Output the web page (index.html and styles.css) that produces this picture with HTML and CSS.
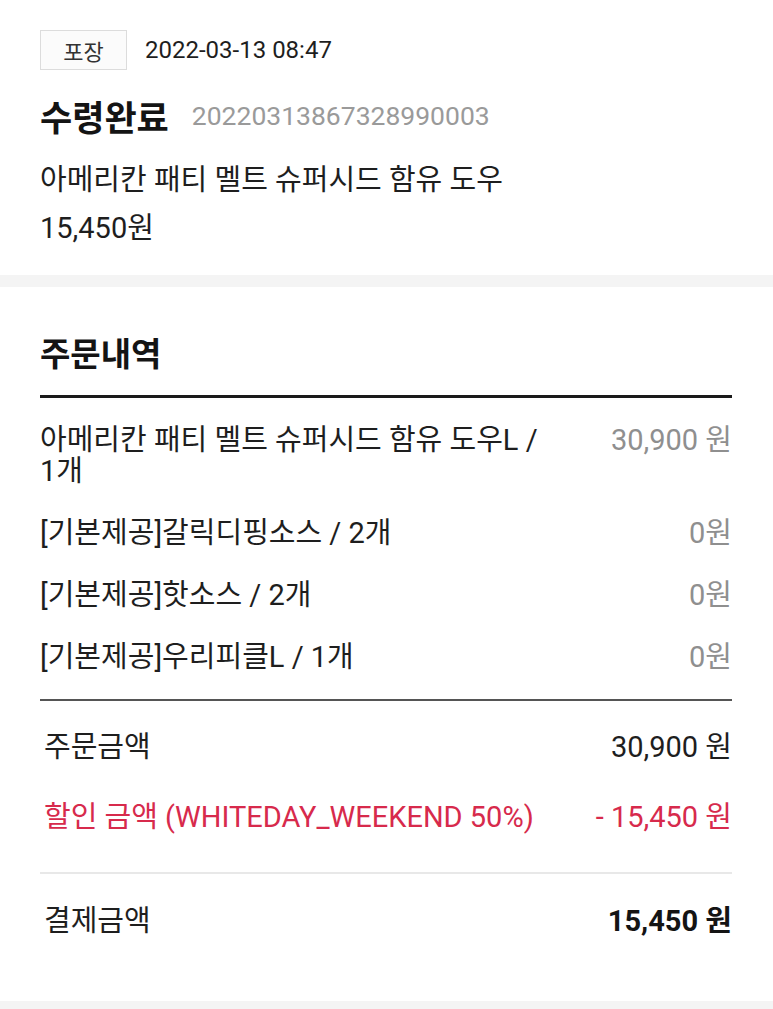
FILE: index.html
```html
<!DOCTYPE html>
<html lang="ko">
<head>
<meta charset="utf-8">
<title>주문 상세</title>
<link rel="stylesheet" href="styles.css">
</head>
<body>
<section class="summary-card">
  <div class="meta">
    <span class="tag">포장</span>
    <span class="date">2022-03-13 08:47</span>
  </div>
  <div class="status-row">
    <span class="status">수령완료</span>
    <span class="order-no">20220313867328990003</span>
  </div>
  <p class="product">아메리칸 패티 멜트 슈퍼시드 함유 도우</p>
  <p class="product">15,450원</p>
</section>

<div class="band"></div>

<section class="orders">
  <h2 class="orders-title">주문내역</h2>
  <ul class="items">
    <li class="item"><span class="item-name">아메리칸 패티 멜트 슈퍼시드 함유 도우L / 1개</span><span class="item-price">30,900 원</span></li>
    <li class="item"><span class="item-name">[기본제공]갈릭디핑소스 / 2개</span><span class="item-price">0원</span></li>
    <li class="item"><span class="item-name">[기본제공]핫소스 / 2개</span><span class="item-price">0원</span></li>
    <li class="item"><span class="item-name">[기본제공]우리피클L / 1개</span><span class="item-price">0원</span></li>
  </ul>
  <div class="amounts">
    <div class="amount-row"><span>주문금액</span><span>30,900 원</span></div>
    <div class="amount-row discount"><span>할인 금액 (WHITEDAY_WEEKEND 50%)</span><span>- 15,450 원</span></div>
  </div>
  <div class="total-row"><span>결제금액</span><span class="total-price">15,450 원</span></div>
</section>

<div class="band bottom"></div>
</body>
</html>
```

FILE: styles.css
```css
* {
  box-sizing: border-box;
}

html, body {
  margin: 0;
  padding: 0;
  background: #ffffff;
}

body {
  font-family: Roboto, "Noto Sans CJK KR", sans-serif;
  color: #1e1e1e;
  width: 773px;
}

.summary-card {
  padding: 30px 40px 23px;
}

.meta {
  display: flex;
  align-items: center;
  gap: 18px;
  height: 40px;
}

.tag {
  width: 87px;
  height: 40px;
  border: 1px solid #dcdcdc;
  background: #fbfbfb;
  display: flex;
  align-items: center;
  justify-content: center;
  font-size: 22px;
  color: #333;
}

.date {
  font-size: 24px;
  color: #1e1e1e;
}

.status-row {
  display: flex;
  align-items: center;
  gap: 23px;
  height: 40px;
  margin-top: 25px;
}

.status {
  font-size: 35px;
  font-weight: 700;
  color: #141414;
}

.order-no {
  font-size: 26.5px;
  color: #9a9a9a;
}

.product {
  margin: 0;
  font-size: 29px;
  line-height: 48px;
}

.product:first-of-type {
  margin-top: 21px;
}

.band {
  height: 12px;
  background: #f4f4f4;
}

.band.bottom {
  height: 8px;
}

.orders {
  padding: 48px 41px 64px 40px;
}

.orders-title {
  margin: 0;
  font-size: 33px;
  line-height: 40px;
  font-weight: 700;
  color: #141414;
  padding-bottom: 20px;
  border-bottom: 3px solid #1a1a1a;
}

.items {
  list-style: none;
  margin: 0;
  padding: 27px 0 26px;
  display: flex;
  flex-direction: column;
  gap: 31px;
  border-bottom: 2px solid #555555;
}

.item {
  display: flex;
  justify-content: space-between;
  gap: 40px;
  font-size: 29px;
  line-height: 31px;
}

.item-name {
  flex: 1;
  color: #1e1e1e;
  word-break: keep-all;
}

.item-price {
  flex-shrink: 0;
  color: #8f8f8f;
}

.amounts {
  padding: 31px 0 39px;
  display: flex;
  flex-direction: column;
  gap: 39px;
  border-bottom: 2px solid #e8e8e8;
}

.amount-row {
  display: flex;
  justify-content: space-between;
  font-size: 29px;
  line-height: 31px;
  padding-left: 4px;
}

.amount-row.discount {
  color: #d72a4c;
}

.total-row {
  display: flex;
  justify-content: space-between;
  font-size: 29px;
  line-height: 31px;
  padding-top: 32px;
  padding-left: 4px;
}

.total-price {
  font-weight: 700;
  color: #141414;
}
```
